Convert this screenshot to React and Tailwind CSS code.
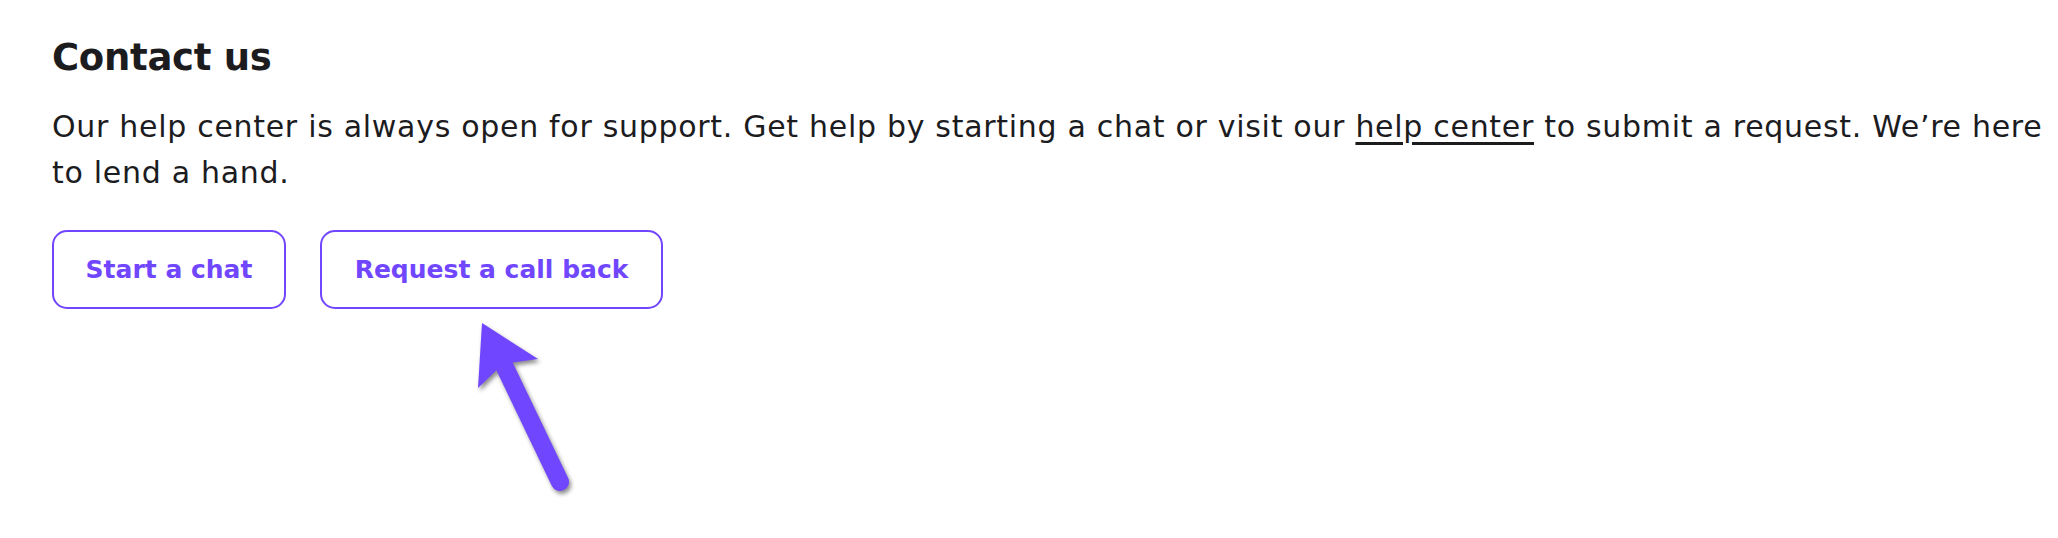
export default function App() {
  return (
    <main className="relative h-[538px] w-full bg-white pl-[52px] pt-[32px] font-['DejaVu_Sans',sans-serif] text-[#1c1c1f]">
      <h2 className="text-[37px] font-bold leading-[52px] tracking-[-0.3px]">Contact us</h2>
      <p className="mt-[20px] text-[30px] leading-[46px] tracking-[0.7px]">
        Our help center is always open for support. Get help by starting a chat or visit our{" "}
        <a href="#" className="underline underline-offset-[5px]">help center</a> to submit a request. We’re here
        <br />
        to lend a hand.
      </p>

      <div className="mt-[34px] flex gap-[34px]">
        <button className="h-[79px] w-[234px] rounded-[15px] border-2 border-[#7146ff] text-[25px] font-bold text-[#7146ff]">
          Start a chat
        </button>
        <button className="h-[79px] w-[343px] rounded-[15px] border-2 border-[#7146ff] text-[25px] font-bold text-[#7146ff]">
          Request a call back
        </button>
      </div>

      {/* annotation arrow */}
      <svg
        className="absolute left-[460px] top-[310px] drop-shadow-[2px_3px_2px_rgba(0,0,0,0.45)]"
        width="120"
        height="190"
        viewBox="0 0 120 190"
      >
        <polygon points="22,13 78,49 43,54 18,78" fill="#7146ff" />
        <line x1="40" y1="47" x2="100" y2="172" stroke="#7146ff" strokeWidth="18" strokeLinecap="round" />
      </svg>
    </main>
  );
}
